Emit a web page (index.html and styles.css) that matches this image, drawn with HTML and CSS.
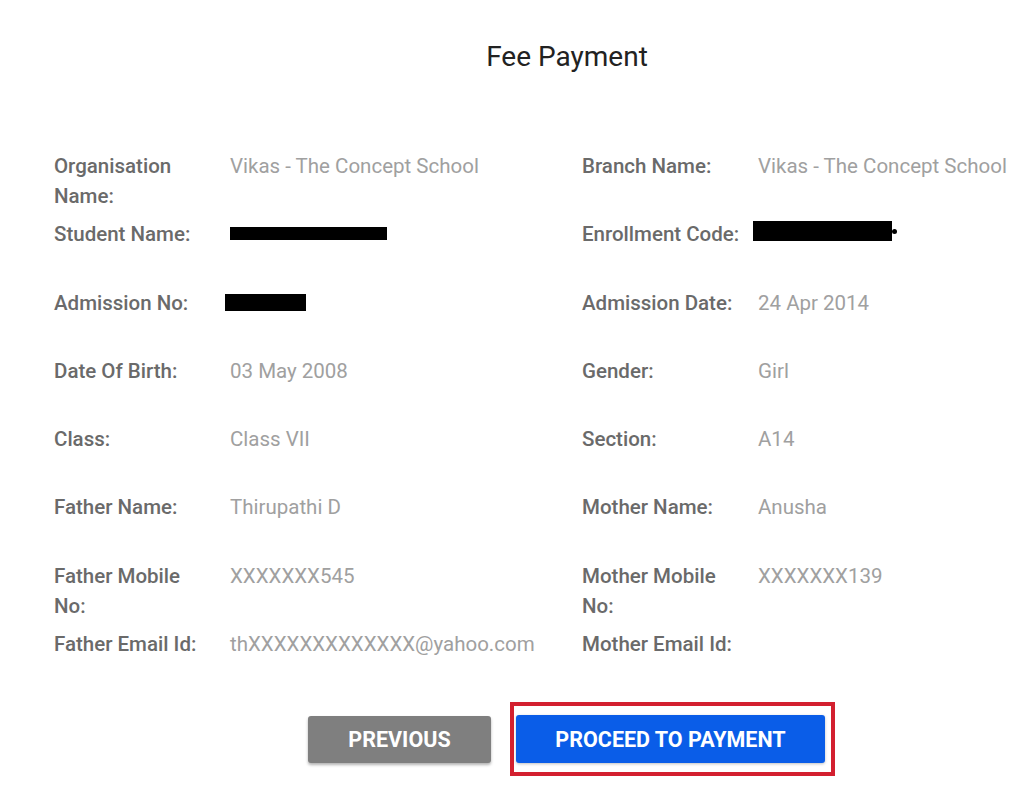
FILE: index.html
```html
<!DOCTYPE html>
<html lang="en">
<head>
<meta charset="utf-8">
<title>Fee Payment</title>
<link rel="stylesheet" href="styles.css">
</head>
<body>
<main class="page">
  <h1 class="title">Fee Payment</h1>
  <section class="details">
    <div class="label">Organisation Name:</div>
    <div class="value">Vikas - The Concept School</div>
    <div class="label">Branch Name:</div>
    <div class="value">Vikas - The Concept School</div>

    <div class="label">Student Name:</div>
    <div class="value"><span class="redact redact-student"></span></div>
    <div class="label">Enrollment Code:</div>
    <div class="value"><span class="redact redact-enroll"></span><span class="redact-dot"></span></div>

    <div class="label">Admission No:</div>
    <div class="value"><span class="redact redact-adm"></span></div>
    <div class="label">Admission Date:</div>
    <div class="value">24 Apr 2014</div>

    <div class="label">Date Of Birth:</div>
    <div class="value">03 May 2008</div>
    <div class="label">Gender:</div>
    <div class="value">Girl</div>

    <div class="label">Class:</div>
    <div class="value">Class VII</div>
    <div class="label">Section:</div>
    <div class="value">A14</div>

    <div class="label">Father Name:</div>
    <div class="value">Thirupathi D</div>
    <div class="label">Mother Name:</div>
    <div class="value">Anusha</div>

    <div class="label">Father Mobile No:</div>
    <div class="value">XXXXXXX545</div>
    <div class="label">Mother Mobile No:</div>
    <div class="value">XXXXXXX139</div>

    <div class="label">Father Email Id:</div>
    <div class="value">thXXXXXXXXXXXXX@yahoo.com</div>
    <div class="label">Mother Email Id:</div>
    <div class="value"></div>
  </section>
  <div class="actions">
    <button class="btn btn-prev" type="button">PREVIOUS</button>
    <div class="highlight">
      <button class="btn btn-pay" type="button">PROCEED TO PAYMENT</button>
    </div>
  </div>
</main>
</body>
</html>
```

FILE: styles.css
```css
* { box-sizing: border-box; }
html, body {
  margin: 0;
  padding: 0;
  background: #ffffff;
}
body {
  font-family: Roboto, "Liberation Sans", Arial, sans-serif;
  width: 1024px;
  height: 791px;
  overflow: hidden;
}
.page {
  padding-top: 42px;
}
.title {
  margin: 0;
  padding-left: 110px;
  text-align: center;
  font-size: 28px;
  line-height: 30px;
  font-weight: 400;
  color: #222222;
}
.details {
  margin-top: 79px;
  margin-left: 54px;
  display: grid;
  grid-template-columns: 176px 352px 176px 1fr;
  grid-auto-rows: 68.3px;
  font-size: 20.5px;
  line-height: 30px;
}
.label {
  font-weight: 500;
  color: #6a6a6a;
  padding-right: 17px;
}
.value {
  font-weight: 400;
  color: #a0a0a0;
  white-space: nowrap;
}
.redact {
  display: inline-block;
  background: #000;
  vertical-align: top;
}
.redact-student {
  width: 157px;
  height: 13px;
  margin-top: 8px;
}
.redact-adm {
  width: 81px;
  height: 17px;
  margin-left: -5px;
  margin-top: 6px;
}
.redact-enroll {
  width: 139px;
  height: 20px;
  margin-left: -5px;
  margin-top: 2px;
}
.redact-dot {
  display: inline-block;
  width: 5px;
  height: 5px;
  border-radius: 50%;
  background: #000;
  vertical-align: top;
  margin-top: 10px;
}
.actions {
  display: flex;
  align-items: center;
  padding-left: 308px;
  margin-top: 5px;
  gap: 19px;
}
.btn {
  font-family: Roboto, "Liberation Sans", Arial, sans-serif;
  border: none;
  color: #ffffff;
  font-weight: 700;
  font-size: 21.5px;
  letter-spacing: 0;
  border-radius: 3px;
  cursor: pointer;
}
.btn-prev {
  width: 183px;
  height: 47px;
  background: #7f7f7f;
  box-shadow: 0 2px 3px rgba(0, 0, 0, 0.3);
}
.highlight {
  border: 4px solid #d3202f;
  padding: 9px 6px 9px 2px;
}
.btn-pay {
  display: block;
  width: 309px;
  height: 48px;
  background: #0a5de8;
  box-shadow: 0 1px 3px rgba(0, 0, 0, 0.25);
}
```
